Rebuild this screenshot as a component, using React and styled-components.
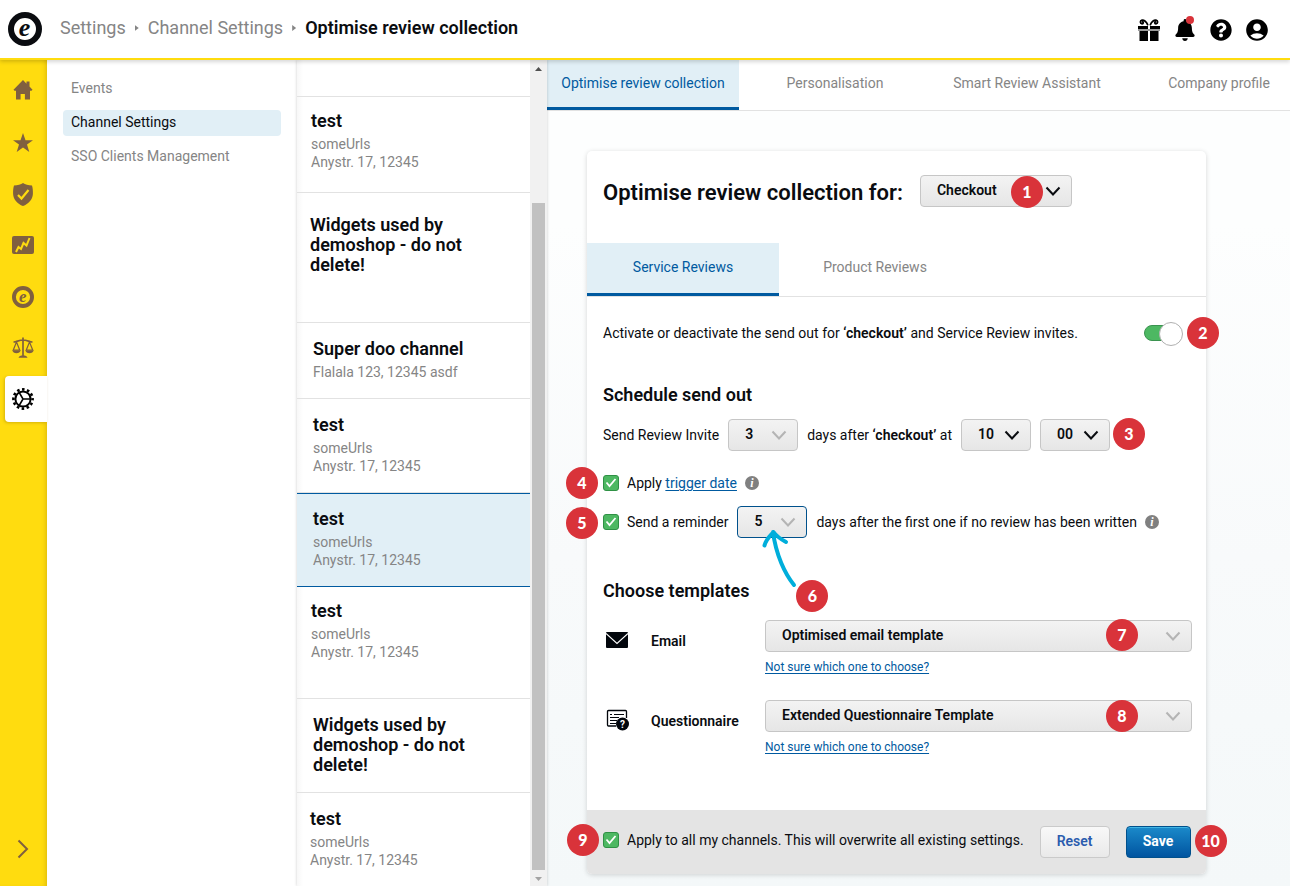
import React, { useState } from "react";
import styled, { createGlobalStyle, css } from "styled-components";
import { FaBell, FaQuestionCircle } from "react-icons/fa";
import { MdAccountCircle } from "react-icons/md";

const yellow = "#ffdc0f";
const brown = "#80603f";
const blue = "#005aa0";
const paleBlue = "#e1eff6";
const grey = "#858585";
const line = "#e2e2e2";
const red = "#d9333a";

const GlobalStyle = createGlobalStyle`
  * {
    box-sizing: border-box;
  }
  body {
    margin: 0;
    font-family: Roboto, "Liberation Sans", sans-serif;
    font-size: 14px;
    line-height: 18px;
    color: #0a0c10;
    background: #fff;
  }
  button, select, input {
    font-family: inherit;
    font-size: inherit;
    color: inherit;
    margin: 0;
  }
  h1, h2, h3, ul, p {
    margin: 0;
    padding: 0;
  }
  ul {
    list-style: none;
  }
  svg {
    display: block;
  }
`;

const Page = styled.div`
  display: flex;
  flex-direction: column;
  height: 100vh;
  overflow: hidden;
`;

/* header */

const Header = styled.header`
  display: flex;
  align-items: center;
  flex: none;
  height: 60px;
  padding: 0 20px 0 8px;
  background: #fff;
  border-bottom: 2px solid ${yellow};
  box-shadow: 0 2px 4px rgba(0, 0, 0, 0.16);
  z-index: 2;
`;

const Breadcrumb = styled.nav`
  display: flex;
  align-items: center;
  flex: 1;
  gap: 9px;
  margin-left: 18px;
  padding-bottom: 2px;
  font-size: 18px;
  line-height: 24px;
  color: ${grey};
  a {
    color: inherit;
    text-decoration: none;
  }
`;

const PageTitle = styled.h1`
  font-size: 18px;
  line-height: 24px;
  font-weight: 600;
  color: #0a0c10;
`;

const Crumb = styled.span`
  width: 4px;
  height: 6px;
  background: ${grey};
  clip-path: polygon(0 0, 100% 50%, 0 100%);
`;

const HeaderActions = styled.div`
  display: flex;
  gap: 10px;
  padding-top: 2px;
`;

const IconButton = styled.button`
  position: relative;
  display: flex;
  align-items: center;
  justify-content: center;
  width: 26px;
  height: 26px;
  padding: 0;
  border: 0;
  background: none;
  color: #000;
`;

const Dot = styled.span`
  position: absolute;
  top: -1px;
  right: 4px;
  width: 8px;
  height: 8px;
  border-radius: 50%;
  background: ${red};
`;

/* columns */

const Columns = styled.div`
  display: flex;
  flex: 1;
  min-height: 0;
`;

const Sidebar = styled.nav`
  display: flex;
  flex-direction: column;
  flex: none;
  gap: 5px;
  width: 47px;
  padding: 10px 0 14px 5px;
  background: ${yellow};
  box-shadow: inset -4px 0 5px -3px rgba(120, 90, 0, 0.28);
`;

const SideButton = styled.button`
  display: flex;
  align-items: center;
  justify-content: center;
  height: 46px;
  padding: 0 6px 0 0;
  border: 0;
  border-radius: 4px 0 0 4px;
  background: ${({ $active }) => ($active ? "#fff" : "none")};
  box-shadow: ${({ $active }) => ($active ? "-1px 1px 3px rgba(120, 90, 0, 0.3)" : "none")};
  color: ${({ $active }) => ($active ? "#000" : brown)};
  &:last-child {
    margin-top: auto;
  }
`;

const SubNav = styled.nav`
  display: flex;
  flex-direction: column;
  flex: none;
  gap: 8px;
  width: 250px;
  padding: 16px;
`;

const SubLink = styled.a`
  padding: 3px 8px 5px;
  border-radius: 4px;
  text-decoration: none;
  background: ${({ $active }) => ($active ? paleBlue : "transparent")};
  color: ${({ $active }) => ($active ? "#0a0c10" : grey)};
`;

const ChannelPane = styled.section`
  display: flex;
  flex: none;
  width: 250px;
  box-shadow: 0 0 3px rgba(0, 0, 0, 0.2);
  z-index: 1;
`;

const ChannelList = styled.ul`
  flex: 1;
  overflow: hidden;
  background: linear-gradient(to right, #f7f7f7, #fff 6px);
`;

const Channel = styled.button`
  display: flex;
  flex-direction: column;
  align-items: flex-start;
  width: 100%;
  min-height: ${({ $height }) => $height}px;
  padding: ${({ $top }) => $top || 16}px 40px 17px ${({ $indent }) => $indent || 16}px;
  border: 0;
  border-bottom: 1px solid ${line};
  background: none;
  text-align: left;
  line-height: 18px;
  color: ${grey};
  ${({ $active }) =>
    $active &&
    css`
      padding-top: 15px;
      border-top: 1px solid ${blue};
      border-bottom-color: ${blue};
      background: ${paleBlue};
    `}
`;

const ChannelName = styled.span`
  font-size: 18px;
  line-height: 20px;
  font-weight: 600;
  color: #0a0c10;
  & + span {
    margin-top: 4px;
  }
`;

const Scrollbar = styled.div`
  display: flex;
  flex-direction: column;
  align-items: center;
  width: 17px;
  padding: 7px 0 5px;
  background: #f1f1f1;
`;

const ScrollArrow = styled.span`
  width: 7px;
  height: 4px;
  background: ${({ $down }) => ($down ? "#a3a3a3" : "#505050")};
  clip-path: ${({ $down }) =>
    $down ? "polygon(0 0, 100% 0, 50% 100%)" : "polygon(50% 0, 100% 100%, 0 100%)"};
`;

const ScrollTrack = styled.div`
  display: flex;
  flex-direction: column;
  justify-content: flex-end;
  flex: 1;
  width: 13px;
  padding: 5px 0 7px;
`;

const ScrollThumb = styled.div`
  height: 84%;
  background: #c1c1c1;
`;

const Main = styled.main`
  display: flex;
  flex-direction: column;
  flex: 1;
  min-width: 0;
  overflow: hidden;
  background: linear-gradient(#fdfefe 20%, #f8fafb 60%, #f4f8f9);
`;

const Tabs = styled.div`
  display: flex;
  flex: none;
  border-bottom: 1px solid ${line};
  background: #fff;
`;

const Tab = styled.button`
  flex: none;
  width: 192px;
  height: ${({ $tall }) => ($tall ? 53 : 50)}px;
  padding: 0 0 2px;
  border: 0;
  border-bottom: 3px solid ${({ $active }) => ($active ? blue : "transparent")};
  background: ${({ $active }) => ($active ? paleBlue : "none")};
  color: ${({ $active }) => ($active ? blue : grey)};
`;

const Content = styled.div`
  padding: 40px 84px 12px 40px;
`;

const Card = styled.form`
  border-radius: 5px;
  background: #fff;
  box-shadow: 0 1px 5px rgba(0, 0, 0, 0.16);
`;

const CardHead = styled.div`
  display: flex;
  align-items: flex-start;
  gap: 17px;
  padding: 24px 16px 33px;
`;

const CardTitle = styled.h2`
  font-size: 22px;
  line-height: 35px;
  font-weight: 600;
`;

const CardBody = styled.div`
  padding: 24px 14px 55px 16px;
`;

const ToggleRow = styled.div`
  display: flex;
  align-items: center;
  justify-content: space-between;
  height: 24px;
  padding-right: 10px;
  b {
    font-weight: 600;
  }
`;

const Anchor = styled.span`
  position: relative;
  display: inline-flex;
  flex: none;
`;

const Toggle = styled.input`
  appearance: none;
  position: relative;
  width: 38px;
  height: 16px;
  border: 1px solid #3b9350;
  border-radius: 8px;
  background: #4db862;
  &::after {
    content: "";
    position: absolute;
    top: -4px;
    right: -2px;
    width: 22px;
    height: 22px;
    border: 1px solid #b0b0b0;
    border-radius: 50%;
    background: #fff;
  }
`;

const SectionTitle = styled.h3`
  margin: 38px 0 12px;
  font-size: 18px;
  line-height: 24px;
  font-weight: 600;
`;

const TemplatesTitle = styled(SectionTitle)`
  margin: 41px 0 17px;
`;

const Row = styled.div`
  display: flex;
  align-items: center;
  gap: 9px;
  height: 32px;
  b {
    font-weight: 600;
  }
`;

const CheckRow = styled(Row)`
  gap: 8px;
  margin-top: ${({ $near }) => ($near ? 7 : 16)}px;
`;

const SelectBox = styled.span`
  position: relative;
  display: flex;
  flex: none;
  width: ${({ $width }) => $width || "100%"};
  svg {
    position: absolute;
    right: 11px;
    top: 11px;
    pointer-events: none;
  }
`;

const Select = styled.select`
  appearance: none;
  width: 100%;
  height: 32px;
  padding: 0 30px 2px 16px;
  border: 1px solid ${({ $focus }) => ($focus ? "#00518c" : "#c6c6c6")};
  border-radius: 4px;
  background: linear-gradient(#f3f3f3, #e6e6e6);
  font-weight: 600;
`;

const CheckBox = styled.span`
  display: grid;
  flex: none;
  width: 16px;
  height: 16px;
  > * {
    grid-area: 1 / 1;
  }
  svg {
    pointer-events: none;
  }
`;

const CheckInput = styled.input`
  appearance: none;
  width: 16px;
  height: 16px;
  border: 1px solid #2f9145;
  border-radius: 3px;
  background: #4db862;
`;

const TextLink = styled.a`
  color: ${blue};
  text-decoration: underline;
  text-underline-offset: 2px;
`;

const HintLink = styled(TextLink)`
  align-self: flex-start;
  font-size: 12px;
  line-height: 16px;
`;

const TemplateRow = styled.div`
  display: grid;
  grid-template-columns: 48px 114px 1fr;
  align-items: start;
  & + & {
    margin-top: 25px;
  }
`;

const TemplateIcon = styled.span`
  display: flex;
  align-items: center;
  height: 40px;
  padding-left: 3px;
`;

const TemplateLabel = styled.label`
  line-height: 42px;
  font-weight: 600;
`;

const TemplateField = styled.div`
  display: flex;
  flex-direction: column;
  gap: 7px;
`;

const CardFoot = styled.footer`
  display: flex;
  align-items: center;
  gap: 16px;
  padding: 16px;
  border-radius: 0 0 5px 5px;
  background: #e4e4e4;
`;

const FootLabel = styled.div`
  display: flex;
  align-items: center;
  flex: 1;
  gap: 8px;
  padding-bottom: 4px;
  white-space: nowrap;
`;

const Button = styled.button`
  height: 32px;
  padding: 0 16px 2px;
  border: 1px solid #cacaca;
  border-radius: 4px;
  background: linear-gradient(#f8f8f8, #e9e9e9);
  font-weight: 600;
  color: #2b5cae;
`;

const PrimaryButton = styled(Button)`
  min-width: 65px;
  border-color: #00508c;
  background: linear-gradient(#1b8aca, #0054a0);
  box-shadow: inset 0 1px 0 #3fb4e4;
  font-weight: 700;
  color: #fff;
`;

const Badge = styled.span`
  position: absolute;
  top: ${({ $top }) => $top}px;
  left: ${({ $left }) => $left}px;
  width: 32px;
  height: 32px;
  border-radius: 50%;
  background: ${red};
  font-family: Lato, "Open Sans", sans-serif;
  font-size: 16px;
  font-weight: 900;
  line-height: 32px;
  text-align: center;
  color: #fff;
  pointer-events: none;
  z-index: 3;
`;

const Arrow = styled.svg`
  position: absolute;
  top: 20px;
  left: 24px;
  overflow: visible;
  pointer-events: none;
`;

/* icons */

const LogoIcon = ({ size }) => (
  <svg width={size} height={size} viewBox="0 0 34 34" fill="none">
    <circle cx="17" cy="17" r="14" stroke="currentColor" strokeWidth="6" />
    <text
      x="16.5"
      y="24"
      textAnchor="middle"
      fontFamily="Liberation Serif, serif"
      fontSize="26"
      fontStyle="italic"
      fontWeight="700"
      fill="currentColor"
    >
      e
    </text>
  </svg>
);

const GiftIcon = () => (
  <svg width="22" height="22" viewBox="0 0 22 22" fill="currentColor">
    <rect x="0" y="7" width="10" height="3" />
    <rect x="12" y="7" width="10" height="3" />
    <rect x="1.5" y="12" width="8.5" height="10" />
    <rect x="12" y="12" width="8.5" height="10" />
    <rect x="0" y="10" width="22" height="2" opacity="0.4" />
    <path
      d="M9.6 5.6C8.6 3 6 .8 4 1.2 1.8 1.6 1.8 4.6 4 4.8c1.6.1 1.6-1.8.5-1.9M12.4 5.6C13.4 3 16 .8 18 1.2c2.2.4 2.2 3.4 0 3.6-1.6.1-1.6-1.8-.5-1.9"
      fill="none"
      stroke="currentColor"
      strokeWidth="1.7"
      strokeLinecap="round"
    />
  </svg>
);

const HomeIcon = () => (
  <svg width="22" height="26" viewBox="0 0 22 26" fill="currentColor">
    <path d="M11 0 1.5 9.8l1 1H4v8.7h4.6V14h4.3v5.5H18v-8.7h1.5l1-1-3-3.2V1.5h-3v2.2z" />
  </svg>
);

const StarIcon = () => (
  <svg width="20" height="22" viewBox="0 0 20 22" fill="currentColor">
    <path d="m10 0 2.5 7.2H20l-6 4.4 2.3 7.4-6.3-4.5L3.7 19 6 11.6 0 7.2h7.500z" />
  </svg>
);

const ShieldIcon = () => (
  <svg width="20" height="25" viewBox="0 0 20 25">
    <path
      d="M10 0c2 1.6 5.500 2.5 9 2.5.8 2.6 1 5.5.9 8.5C19.6 16.5 15.5 21 10 23 4.5 21 .4 16.5.1 11 0 8 .2 5.1 1 2.5c3.5 0 7-.9 9-2.500z"
      fill="currentColor"
    />
    <path d="m5 12 3.5 3.5L15.5 7" fill="none" stroke={yellow} strokeWidth="2.2" />
  </svg>
);

const ChartIcon = () => (
  <svg width="22" height="20" viewBox="0 0 22 20">
    <rect y="0" width="22" height="18" rx="2" fill="currentColor" />
    <path d="m4 16 2.5-5 2.5 2 2.5-6 3 2.5L17.5 2" fill="none" stroke={yellow} strokeWidth="2" />
  </svg>
);

const ScalesIcon = () => (
  <svg width="22" height="22" viewBox="0 0 22 22" fill="none" stroke="currentColor">
    <path d="M11 .5v19M1.5 5c3 0 5.5-2 9.5-2s6.5 2 9.5 2" strokeWidth="1.7" />
    <path d="M4.5 5 1.3 13h6.4zM17.5 5l-3.2 8h6.400z" strokeWidth="1.2" />
    <path d="M.3 13.2h8.4c-.5 2-2 3-4.2 3s-3.7-1-4.2-3zM13.3 13.2h8.4c-.5 2-2 3-4.2 3s-3.7-1-4.2-3z" fill="currentColor" stroke="none" />
    <path d="M6.5 20.8c.5-1.8 2-2.3 4.5-2.3s4 .5 4.5 2.3z" fill="currentColor" stroke="none" />
  </svg>
);

const GearIcon = () => (
  <svg width="22" height="22" viewBox="0 0 22 22" fill="none" stroke="currentColor">
    <circle cx="11" cy="11" r="7.6" strokeWidth="2" />
    <circle cx="11" cy="11" r="9.6" strokeWidth="2.6" strokeDasharray="2.6 2.426" strokeDashoffset="1.3" />
    <path d="M11 11h7.5M11 11 7.2 4.5M11 11l-3.800 6.5" strokeWidth="1.5" />
  </svg>
);

const Chevron = ({ muted }) => (
  <svg width="16" height="10" viewBox="0 0 16 10" fill="none">
    <path d="m1.5 1.5 6.5 7 6.5-7" stroke={muted ? "#b4b4b4" : "#0a0c10"} strokeWidth="2" />
  </svg>
);

const InfoIcon = () => (
  <svg width="14" height="14" viewBox="0 0 14 14">
    <circle cx="7" cy="7" r="7" fill="#808080" />
    <text
      x="7"
      y="11"
      textAnchor="middle"
      fontFamily="Liberation Serif, serif"
      fontSize="12"
      fontStyle="italic"
      fontWeight="700"
      fill="#fff"
    >
      i
    </text>
  </svg>
);

const MailIcon = () => (
  <svg width="22" height="16" viewBox="0 0 22 16">
    <rect width="22" height="16" rx="1" fill="#02060c" />
    <path d="m0 1.5 11 10 11-10" fill="none" stroke="#fff" strokeWidth="1.1" />
  </svg>
);

const FormIcon = () => (
  <svg width="23" height="22" viewBox="0 0 23 22" fill="none" stroke="#02060c">
    <path d="M20.5 9V2.5a1 1 0 0 0-1-1h-17a1 1 0 0 0-1 1V16a1 1 0 0 0 1 1H10" strokeWidth="1.3" />
    <path d="M4 5.500h2M8 5.500h10M4 8.500h9M4 11.500h7M4 14.500h6" />
    <circle cx="16.5" cy="15" r="6.5" fill="#02060c" stroke="none" />
    <text x="16.5" y="18.5" textAnchor="middle" fontFamily="Roboto, sans-serif" fontSize="10" fontWeight="700" fill="#fff" stroke="none">
      ?
    </text>
  </svg>
);

/* parts */

const sideItems = [
  { name: "Home", icon: <HomeIcon /> },
  { name: "Reviews", icon: <StarIcon /> },
  { name: "Protection", icon: <ShieldIcon /> },
  { name: "Insights", icon: <ChartIcon /> },
  { name: "Trustmark", icon: <LogoIcon size={22} /> },
  { name: "Legal", icon: <ScalesIcon /> },
  { name: "Settings", icon: <GearIcon />, active: true },
];

const channels = [
  { height: 37 },
  { name: "test", lines: ["someUrls", "Anystr. 17, 12345"], height: 96, top: 14, indent: 14 },
  { name: "Widgets used by demoshop - do not delete!", height: 130, top: 22, indent: 13 },
  { name: "Super doo channel", lines: ["Flalala 123, 12345 asdf"], height: 76 },
  { name: "test", lines: ["someUrls", "Anystr. 17, 12345"], height: 94 },
  { name: "test", lines: ["someUrls", "Anystr. 17, 12345"], height: 94, active: true },
  { name: "test", lines: ["someUrls", "Anystr. 17, 12345"], height: 112, top: 14, indent: 14 },
  { name: "Widgets used by demoshop - do not delete!", height: 94 },
  { name: "test", lines: ["someUrls", "Anystr. 17, 12345"], height: 94, indent: 13 },
];

const Picker = ({ id, label, width, muted, focus, options }) => (
  <SelectBox $width={width}>
    <Select id={id} aria-label={label} $focus={focus}>
      {options.map((option) => (
        <option key={option}>{option}</option>
      ))}
    </Select>
    <Chevron muted={muted} />
  </SelectBox>
);

const Check = ({ id }) => {
  const [checked, setChecked] = useState(true);
  return (
    <CheckBox>
      <CheckInput id={id} type="checkbox" checked={checked} onChange={() => setChecked(!checked)} />
      {checked && (
        <svg width="16" height="16" viewBox="0 0 16 16" fill="none">
          <path d="m3.5 7.5 3 3.5 6-7" stroke="#fff" strokeWidth="1.8" />
        </svg>
      )}
    </CheckBox>
  );
};

const App = () => (
  <Page>
    <GlobalStyle />
    <Header>
      <LogoIcon size={34} />
      <Breadcrumb aria-label="Breadcrumb">
        <a href="#settings">Settings</a>
        <Crumb />
        <a href="#channels">Channel Settings</a>
        <Crumb />
        <PageTitle>Optimise review collection</PageTitle>
      </Breadcrumb>
      <HeaderActions>
        <IconButton aria-label="Rewards"><GiftIcon /></IconButton>
        <IconButton aria-label="Notifications"><FaBell size={22} /><Dot /></IconButton>
        <IconButton aria-label="Help"><FaQuestionCircle size={22} /></IconButton>
        <IconButton aria-label="Account"><MdAccountCircle size={26} /></IconButton>
      </HeaderActions>
    </Header>
    <Columns>
      <Sidebar aria-label="Main">
        {sideItems.map(({ name, icon, active }) => (
          <SideButton key={name} aria-label={name} $active={active}>{icon}</SideButton>
        ))}
        <SideButton aria-label="Expand">
          <svg width="12" height="20" viewBox="0 0 12 20" fill="none">
            <path d="m1.5 1.5 8.5 8.5-8.5 8.5" stroke="currentColor" strokeWidth="2" />
          </svg>
        </SideButton>
      </Sidebar>
      <SubNav aria-label="Settings">
        <SubLink href="#events">Events</SubLink>
        <SubLink href="#channels" $active>Channel Settings</SubLink>
        <SubLink href="#sso">SSO Clients Management</SubLink>
      </SubNav>
      <ChannelPane>
        <ChannelList>
          {channels.map(({ name, lines = [], height, top, indent, active }, i) => (
            <li key={i}>
              <Channel $height={height} $top={top} $indent={indent} $active={active}>
                {name && <ChannelName>{name}</ChannelName>}
                {lines.map((text) => <span key={text}>{text}</span>)}
              </Channel>
            </li>
          ))}
        </ChannelList>
        <Scrollbar>
          <ScrollArrow />
          <ScrollTrack><ScrollThumb /></ScrollTrack>
          <ScrollArrow $down />
        </Scrollbar>
      </ChannelPane>
      <Main>
        <Tabs>
          <Tab $active>Optimise review collection</Tab>
          <Tab>Personalisation</Tab>
          <Tab>Smart Review Assistant</Tab>
          <Tab>Company profile</Tab>
        </Tabs>
        <Content>
          <Card onSubmit={(e) => e.preventDefault()}>
            <CardHead>
              <CardTitle>Optimise review collection for:</CardTitle>
              <Anchor>
                <Picker label="Event" width="152px" options={["Checkout"]} />
                <Badge $top={1} $left={91}>1</Badge>
              </Anchor>
            </CardHead>
            <Tabs>
              <Tab type="button" $tall $active>Service Reviews</Tab>
              <Tab type="button" $tall>Product Reviews</Tab>
            </Tabs>
            <CardBody>
              <ToggleRow>
                <label htmlFor="sendout">
                  Activate or deactivate the send out for <b>‘checkout’</b> and Service Review invites.
                </label>
                <Anchor>
                  <Toggle id="sendout" type="checkbox" role="switch" defaultChecked />
                  <Badge $top={-8} $left={43}>2</Badge>
                </Anchor>
              </ToggleRow>

              <SectionTitle>Schedule send out</SectionTitle>
              <Row>
                <label htmlFor="days">Send Review Invite</label>
                <Picker id="days" width="70px" muted options={["3"]} />
                <span>days after <b>‘checkout’</b> at</span>
                <Picker label="Hour" width="70px" options={["10"]} />
                <Anchor>
                  <Picker label="Minute" width="70px" options={["00"]} />
                  <Badge $top={-1} $left={73}>3</Badge>
                </Anchor>
              </Row>
              <CheckRow>
                <Anchor>
                  <Check id="trigger" />
                  <Badge $top={-8} $left={-37}>4</Badge>
                </Anchor>
                <label htmlFor="trigger">
                  Apply <TextLink href="#trigger-date">trigger date</TextLink>
                </label>
                <InfoIcon />
              </CheckRow>
              <CheckRow $near>
                <Anchor>
                  <Check id="reminder" />
                  <Badge $top={-7} $left={-37}>5</Badge>
                </Anchor>
                <Row>
                  <label htmlFor="reminder">Send a reminder</label>
                  <Anchor>
                    <Picker label="Reminder days" width="70px" muted focus options={["5"]} />
                    <Arrow width="40" height="66" viewBox="0 0 40 66" fill="none">
                      <path
                        d="M33 59C24 48 15 29 12 6M3.5 19.5C5 13 9 10 12.5 6c3 4.5 7 7 12.5 10"
                        stroke="#00aedb"
                        strokeWidth="4"
                        strokeLinecap="round"
                        strokeLinejoin="round"
                      />
                    </Arrow>
                    <Badge $top={74} $left={59}>6</Badge>
                  </Anchor>
                  <span>days after the first one if no review has been written</span>
                </Row>
                <InfoIcon />
              </CheckRow>

              <TemplatesTitle>Choose templates</TemplatesTitle>
              <TemplateRow>
                <TemplateIcon><MailIcon /></TemplateIcon>
                <TemplateLabel htmlFor="email">Email</TemplateLabel>
                <TemplateField>
                  <SelectBox>
                    <Select id="email"><option>Optimised email template</option></Select>
                    <Chevron muted />
                    <Badge $top={-1} $left={341}>7</Badge>
                  </SelectBox>
                  <HintLink href="#email-help">Not sure which one to choose?</HintLink>
                </TemplateField>
              </TemplateRow>
              <TemplateRow>
                <TemplateIcon><FormIcon /></TemplateIcon>
                <TemplateLabel htmlFor="questionnaire">Questionnaire</TemplateLabel>
                <TemplateField>
                  <SelectBox>
                    <Select id="questionnaire"><option>Extended Questionnaire Template</option></Select>
                    <Chevron muted />
                    <Badge $top={0} $left={341}>8</Badge>
                  </SelectBox>
                  <HintLink href="#questionnaire-help">Not sure which one to choose?</HintLink>
                </TemplateField>
              </TemplateRow>
            </CardBody>
            <CardFoot>
              <FootLabel>
                <Anchor>
                  <Check id="all" />
                  <Badge $top={-8} $left={-36}>9</Badge>
                </Anchor>
                <label htmlFor="all">
                  Apply to all my channels. This will overwrite all existing settings.
                </label>
              </FootLabel>
              <Button type="reset">Reset</Button>
              <Anchor>
                <PrimaryButton type="submit">Save</PrimaryButton>
                <Badge $top={-1} $left={69}>10</Badge>
              </Anchor>
            </CardFoot>
          </Card>
        </Content>
      </Main>
    </Columns>
  </Page>
);

export default App;
